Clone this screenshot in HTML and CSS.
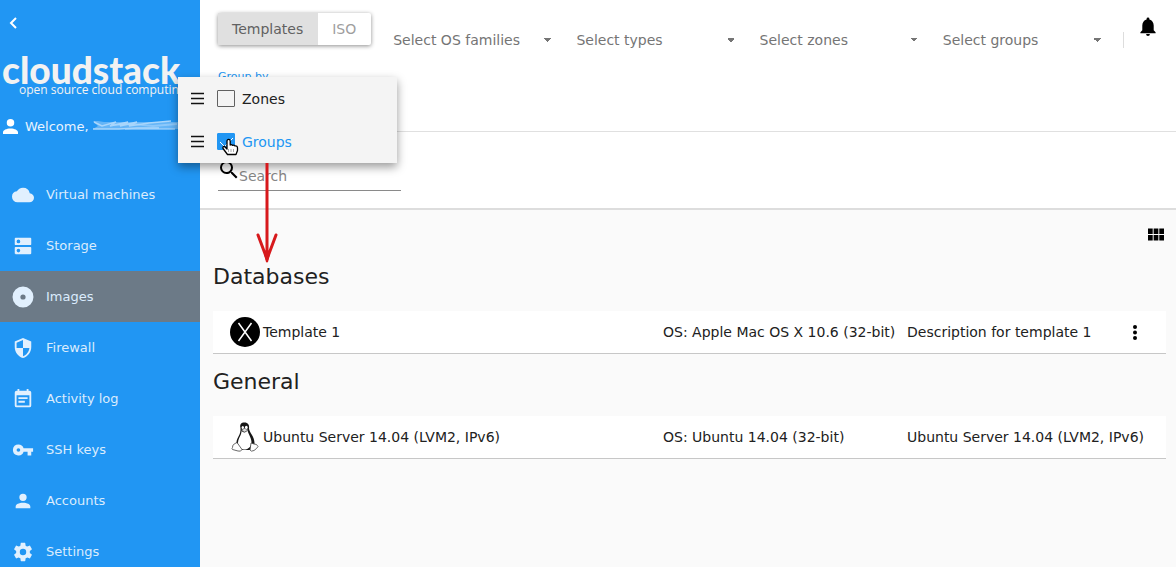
FILE: index.html
```html
<!DOCTYPE html>
<html lang="en">
<head>
<meta charset="utf-8">
<title>CloudStack – Images</title>
<link rel="stylesheet" href="styles.css">
</head>
<body>
<div class="app">
  <aside class="sidebar">
    <button class="back" type="button" aria-label="Collapse menu">
      <svg width="8" height="12" viewBox="0 0 8 12"><path d="M7 1 2 6l5 5" fill="none" stroke="currentColor" stroke-width="2"/></svg>
    </button>
    <div class="logo">
      <div class="logo-name">cloudstack</div>
      <div class="logo-tag">open source cloud computing</div>
    </div>
    <div class="user">
      <svg class="user-icon" width="15" height="15" viewBox="4 4 16 16"><path d="M12 4a4 4 0 0 1 4 4 4 4 0 0 1-4 4 4 4 0 0 1-4-4 4 4 0 0 1 4-4m0 10c4.400 0 8 1.800 8 4v2H4v-2c0-2.200 3.600-4 8-4z"/></svg>
      <span>Welcome,</span>
      <svg class="user-mask" width="88" height="12" viewBox="0 0 88 12"><path d="M0 1h5l6 1 74 0v7H0l5-3z" fill="#64b5f7"/><g fill="none" stroke="#a9d6fb"><path d="M1 2l8 4 14-4-6 4 18-4-8 4 17-4-8 4 20-3 22-2M0 9h26l18-1h22" stroke-width="1.500"/><path d="M18 5l22-1 20 2 24-2M32 9h50" stroke-width="2" opacity=".6"/></g></svg>
    </div>
    <nav class="nav">
      <a href="#vm" class="nav-item"><svg viewBox="0 0 24 24"><path d="M19.350 10.040A7.490 7.490 0 0 0 12 4C9.110 4 6.600 5.640 5.350 8.040A5.990 5.990 0 0 0 0 14a6 6 0 0 0 6 6h13a5 5 0 0 0 5-5c0-2.640-2.050-4.780-4.650-4.960z"/></svg>Virtual machines</a>
      <a href="#storage" class="nav-item"><svg viewBox="0 0 24 24"><path d="M20 13H4a1 1 0 0 0-1 1v6c0 .550.450 1 1 1h16c.550 0 1-.450 1-1v-6a1 1 0 0 0-1-1zM7 19a2 2 0 1 1 0-4 2 2 0 0 1 0 4zM20 3H4a1 1 0 0 0-1 1v6c0 .550.450 1 1 1h16c.550 0 1-.450 1-1V4a1 1 0 0 0-1-1zM7 9a2 2 0 1 1 0-4 2 2 0 0 1 0 4z"/></svg>Storage</a>
      <a href="#images" class="nav-item nav-item-active"><svg viewBox="1.500 1.500 21 21"><path fill-rule="evenodd" d="M12 2a10 10 0 1 0 0 20 10 10 0 0 0 0-20zm0 7.500a2.500 2.500 0 1 1 0 5 2.500 2.500 0 0 1 0-5z"/></svg>Images</a>
      <a href="#firewall" class="nav-item"><svg viewBox="0 0 24 24"><path d="M12 1 3 5v6c0 5.550 3.840 10.740 9 12 5.160-1.260 9-6.450 9-12V5l-9-4zm0 10.990h7c-.530 4.120-3.280 7.790-7 8.940V12H5V6.300l7-3.110v8.800z"/></svg>Firewall</a>
      <a href="#log" class="nav-item"><svg viewBox="0 0 24 24"><path d="M17 10H7v2h10v-2zm2-7h-1V1h-2v2H8V1H6v2H5a2 2 0 0 0-2 2v14a2 2 0 0 0 2 2h14a2 2 0 0 0 2-2V5a2 2 0 0 0-2-2zm0 16H5V8h14v11zm-5-5H7v2h7v-2z"/></svg>Activity log</a>
      <a href="#ssh" class="nav-item"><svg viewBox="0 0 24 24"><path d="M12.650 10A5.990 5.990 0 0 0 7 6a6 6 0 1 0 5.650 8H17v4h4v-4h2v-4H12.650zM7 14a2 2 0 1 1 0-4 2 2 0 0 1 0 4z"/></svg>SSH keys</a>
      <a href="#accounts" class="nav-item"><svg viewBox="0 0 24 24"><path d="M12 4a4 4 0 0 1 4 4 4 4 0 0 1-4 4 4 4 0 0 1-4-4 4 4 0 0 1 4-4m0 10c4.400 0 8 1.800 8 4v2H4v-2c0-2.200 3.600-4 8-4z"/></svg>Accounts</a>
      <a href="#settings" class="nav-item"><svg viewBox="0 0 24 24"><path d="M12 15.500A3.500 3.500 0 0 1 8.500 12 3.500 3.500 0 0 1 12 8.500a3.500 3.500 0 0 1 3.500 3.500 3.500 3.500 0 0 1-3.500 3.500m7.430-2.530c.040-.320.070-.640.070-.970s-.030-.660-.070-1l2.110-1.630c.190-.150.240-.420.120-.640l-2-3.460c-.120-.220-.390-.310-.610-.220l-2.490 1c-.520-.390-1.060-.730-1.690-.980l-.370-2.650A.506.506 0 0 0 14 2h-4c-.250 0-.460.180-.500.420l-.370 2.650c-.630.250-1.170.590-1.690.980l-2.490-1c-.220-.090-.490 0-.610.220l-2 3.460c-.130.220-.070.490.120.640L4.570 11c-.040.340-.070.670-.070 1s.030.650.070.970l-2.110 1.660c-.190.150-.250.420-.120.640l2 3.460c.120.220.390.300.610.220l2.490-1.010c.520.400 1.060.740 1.690.990l.370 2.650c.040.240.250.420.500.420h4c.250 0 .460-.180.500-.420l.370-2.650c.630-.260 1.170-.590 1.690-.990l2.490 1.010c.220.080.490 0 .610-.220l2-3.460c.120-.220.070-.490-.120-.640l-2.110-1.660z"/></svg>Settings</a>
    </nav>
  </aside>

  <main class="main">
    <header class="filters">
      <div class="filter-row">
        <div class="toggle" role="group" aria-label="Image kind">
          <button type="button" class="toggle-button toggle-on" aria-pressed="true">Templates</button>
          <button type="button" class="toggle-button" aria-pressed="false">ISO</button>
        </div>
        <div class="selects">
          <select class="select" aria-label="OS families"><option>Select OS families</option></select>
          <select class="select" aria-label="Types"><option>Select types</option></select>
          <select class="select" aria-label="Zones"><option>Select zones</option></select>
          <select class="select" aria-label="Groups"><option>Select groups</option></select>
        </div>
        <div class="divider"></div>
        <button class="bell" type="button" aria-label="Notifications">
          <svg width="16" height="19" viewBox="4 2 16 20"><path d="M12 22a2 2 0 0 0 2-2h-4a2 2 0 0 0 2 2zm6-6v-5c0-3.070-1.640-5.640-4.500-6.320V4a1.500 1.500 0 0 0-3 0v.680C7.630 5.360 6 7.920 6 11v5l-2 2v1h16v-1l-2-2z"/></svg>
        </button>
      </div>
      <div class="group-by">
        <div class="group-label">Group by</div>
        <div class="group-menu">
          <div class="group-option">
            <svg class="handle" width="13" height="13" viewBox="0 0 13 13"><path d="M0 1.500h13M0 6.500h13M0 11.500h13" stroke="#111" stroke-width="1.500"/></svg>
            <input class="check" type="checkbox" id="by-zones">
            <label for="by-zones">Zones</label>
          </div>
          <div class="group-option group-option-on">
            <svg class="handle" width="13" height="13" viewBox="0 0 13 13"><path d="M0 1.500h13M0 6.500h13M0 11.500h13" stroke="#111" stroke-width="1.500"/></svg>
            <input class="check" type="checkbox" id="by-groups" checked>
            <label for="by-groups">Groups</label>
          </div>
          <svg class="pointer" width="17" height="18" viewBox="0 0 17 18"><path d="M5 10V3a1.600 1.600 0 0 1 3.200 0v4q1.300-1 2.400.4 1.300-.8 2.300.5 2.600-.4 2.600 2.100v2.500l-1.500 4H5.500L1 10.500Q.5 8.300 2.500 8.500L5 11z" fill="#fff" stroke="#000" stroke-width="1.300" stroke-linejoin="round"/><path d="M6.500 11v3M9 11v3M11.500 11v3" stroke="#aaa"/></svg>
          <svg class="arrow" width="24" height="101" viewBox="0 0 24 101"><path d="M12 0v96M3 72l9 24 9-24" fill="none" stroke="#d7191c" stroke-width="3" stroke-linecap="round"/><path d="M9 91h6l-2 8h-2z" fill="#d7191c"/></svg>
        </div>
      </div>
    </header>

    <section class="search-bar">
      <div class="search">
        <svg width="18" height="18" viewBox="3 3 18 18"><path d="M15.500 14h-.790l-.280-.270A6.470 6.470 0 0 0 16 9.500 6.500 6.500 0 1 0 9.500 16c1.610 0 3.090-.590 4.230-1.570l.270.280v.790l5 4.990L20.490 19l-4.990-5zm-6 0a4.500 4.500 0 1 1 0-9 4.500 4.500 0 0 1 0 9z"/></svg>
        <input type="text" placeholder="Search" aria-label="Search">
      </div>
    </section>

    <section class="content">
      <div class="view-tools">
        <button type="button" class="view" aria-label="Card view"><svg width="16" height="13" viewBox="0 0 17 13"><path d="M0 0h5v6H0zM6 0h5v6H6zM12 0h5v6h-5zM0 7h5v6H0zM6 7h5v6H6zM12 7h5v6h-5z"/></svg></button>
      </div>
      <h2 class="group-title">Databases</h2>
      <article class="row">
        <div class="row-name">
          <svg width="30" height="30" viewBox="0 0 30 30"><circle cx="15" cy="15" r="15"/><path d="M8.500 6 21.500 24M21.500 6 8.500 24" stroke="#fff" stroke-width="1.500"/></svg>
          <span>Template 1</span>
        </div>
        <div>OS: Apple Mac OS X 10.6 (32-bit)</div>
        <div class="row-desc">
          <span>Description for template 1</span>
          <button type="button" class="more" aria-label="Actions"><svg width="4" height="15" viewBox="0 0 4 15"><circle cx="2" cy="2" r="2"/><circle cx="2" cy="7.500" r="2"/><circle cx="2" cy="13" r="2"/></svg></button>
        </div>
      </article>
      <h2 class="group-title">General</h2>
      <article class="row">
        <div class="row-name">
          <svg width="30" height="30" viewBox="0 0 30 30"><path d="M10.500 6C9.500 2.500 11 .500 14.500.500S19.500 3 19 6.500c.300 4 5.500 8 5.500 14.500 0 4-2.500 7-5 7h-9C8 27 6 24 6.500 20c.500-5 4.500-7 4-14z" fill="#161616"/><path d="M11.500 9q3 3 6-.500c1 4 4.500 8 4 13-1 4-4 6-7.500 6-4 0-6.500-3-6-7 .500-5 3.500-7 3.500-11.500z" fill="#fff"/><ellipse cx="12.800" cy="5.500" rx="1.200" ry="1.500" fill="#fff"/><ellipse cx="16.300" cy="5.500" rx="1.400" ry="1.700" fill="#fff"/><path d="M11.500 8l3-1.500L18 8l-3.500 2z" fill="#ddd" stroke="#777" stroke-width=".5"/><path d="M5 21.500l2-1 5 7q-1 2.500-4 1.500l-5.500-1.500q-1-1 0-2-.5-2.500 2.500-4zM21 21l3 1 2.500.5 1.500 2q-1 2-4 4-3 1.500-4-.5z" fill="#fff" stroke="#444" stroke-width=".8"/></svg>
          <span>Ubuntu Server 14.04 (LVM2, IPv6)</span>
        </div>
        <div>OS: Ubuntu 14.04 (32-bit)</div>
        <div class="row-desc"><span>Ubuntu Server 14.04 (LVM2, IPv6)</span></div>
      </article>
    </section>
  </main>
</div>
</body>
</html>
```
FILE: styles.css
```css
* { box-sizing: border-box; }

body {
  margin: 0;
  font-family: "DejaVu Sans", sans-serif;
  font-size: 14px;
  color: #212121;
  background: #fafafa;
}

button, select, input { font: inherit; color: inherit; }

button {
  padding: 0;
  border: 0;
  background: none;
}

svg { display: block; flex: none; }

.app {
  display: flex;
  height: 100vh;
  overflow: hidden;
}

.sidebar {
  flex: none;
  width: 200px;
  background: #2196f3;
  color: #e8f3fe;
}

.back {
  display: block;
  padding: 17px 9px 16px;
  color: #fff;
}

.logo {
  padding: 4px 0 0 2px;
  white-space: nowrap;
  color: #f2f2f2;
}

.logo-name {
  font: 900 37px/42px Lato, sans-serif;
  height: 34px;
}

.logo-tag {
  padding-left: 17px;
  font: 12px/14px "Open Sans", sans-serif;
}

.user {
  display: flex;
  align-items: center;
  height: 56px;
  padding: 2px 0 0 3px;
  font-size: 13px;
}

.user-icon { fill: #fff; margin-right: 7px; }
.user-mask { margin-left: 4px; }

.nav { display: flex; flex-direction: column; padding-top: 16px; }

.nav-item {
  display: flex;
  align-items: center;
  gap: 12px;
  height: 51px;
  padding-left: 12px;
  font-size: 13px;
  color: #dbecfd;
  text-decoration: none;
}

.nav-item svg { width: 22px; height: 22px; fill: #e1f0fe; }
.nav-item-active { background: #6c7a87; }

.main { flex: 1; min-width: 0; }

.filters {
  height: 132px;
  padding: 13px 20px 0 18px;
  background: #fff;
  border-bottom: 1px solid #e0e0e0;
}

.filter-row { display: flex; align-items: flex-start; }

.toggle {
  display: flex;
  border-radius: 2px;
  box-shadow: 0 1px 4px rgba(0, 0, 0, .45);
}

.toggle-button {
  height: 32px;
  padding: 0 15px 0 14px;
  color: #9e9e9e;
}

.toggle-on { background: #e0e0e0; color: #616161; }

.selects {
  display: grid;
  grid-template-columns: repeat(4, 1fr);
  gap: 25px;
  flex: 1;
  padding: 15px 22px 0;
}

.select {
  appearance: none;
  min-width: 0;
  height: 24px;
  padding: 0;
  border: 0;
  color: #757575;
  background: conic-gradient(from -45deg at 50% 100%, #757575 90deg, transparent 0) right center / 8px 4px no-repeat;
}

.divider {
  width: 1px;
  height: 16px;
  margin-top: 19px;
  background: #ddd;
}

.bell { padding: 4px 0 0 16px; }

.group-by { position: relative; }

.group-label {
  padding-top: 18px;
  font-size: 11px;
  line-height: 14px;
  color: #2196f3;
}

.group-menu {
  position: absolute;
  top: 25px;
  left: -40px;
  z-index: 2;
  width: 219px;
  background: #f4f4f4;
  box-shadow: 0 4px 9px rgba(0, 0, 0, .4);
}

.group-option {
  display: flex;
  align-items: center;
  height: 43px;
  padding-left: 13px;
}

.group-option-on { color: #2196f3; }

.check {
  appearance: none;
  width: 18px;
  height: 17px;
  margin: 0 7px 0 13px;
  border: 1px solid #616161;
  border-radius: 1px;
}

.check:checked {
  border-color: #2196f3;
  background:
    linear-gradient(45deg, transparent 42%, #fff 42% 58%, transparent 58%) 2px 8px / 5px 5px no-repeat,
    linear-gradient(-45deg, transparent 45%, #fff 45% 55%, transparent 55%) 6px 4px / 9px 9px no-repeat,
    #2196f3;
}

.pointer { position: absolute; left: 44px; top: 61px; }
.arrow { position: absolute; left: 77px; top: 86px; }

.search-bar {
  height: 78px;
  padding: 29px 18px 0;
  background: #fff;
  border-bottom: 2px solid #ddd;
}

.search {
  display: flex;
  align-items: flex-start;
  width: 183px;
  height: 30px;
  padding-left: 2px;
  border-bottom: 1px solid #8a8a8a;
}

.search input {
  flex: 1;
  min-width: 0;
  height: 22px;
  margin-top: 4px;
  padding: 0 0 0 1px;
  border: 0;
  background: none;
}

.search input::placeholder { color: #858585; }

.content { padding: 18px 10px 0 13px; }

.view-tools { display: flex; justify-content: flex-end; padding: 0 2px 8px; }

.group-title {
  margin: 0;
  padding: 16px 0 23px;
  font-size: 22px;
  font-weight: 400;
  line-height: 23px;
}

.row {
  display: grid;
  grid-template-columns: minmax(0, 1fr) 244px 259px;
  align-items: center;
  height: 43px;
  background: #fff;
  border-bottom: 1px solid #c7c7c7;
}

.row-name {
  display: flex;
  align-items: center;
  gap: 3px;
  padding-left: 17px;
}

.row-desc {
  display: flex;
  align-items: center;
  justify-content: space-between;
  padding-right: 16px;
}

.more { display: grid; place-items: center; width: 30px; height: 20px; }
```
